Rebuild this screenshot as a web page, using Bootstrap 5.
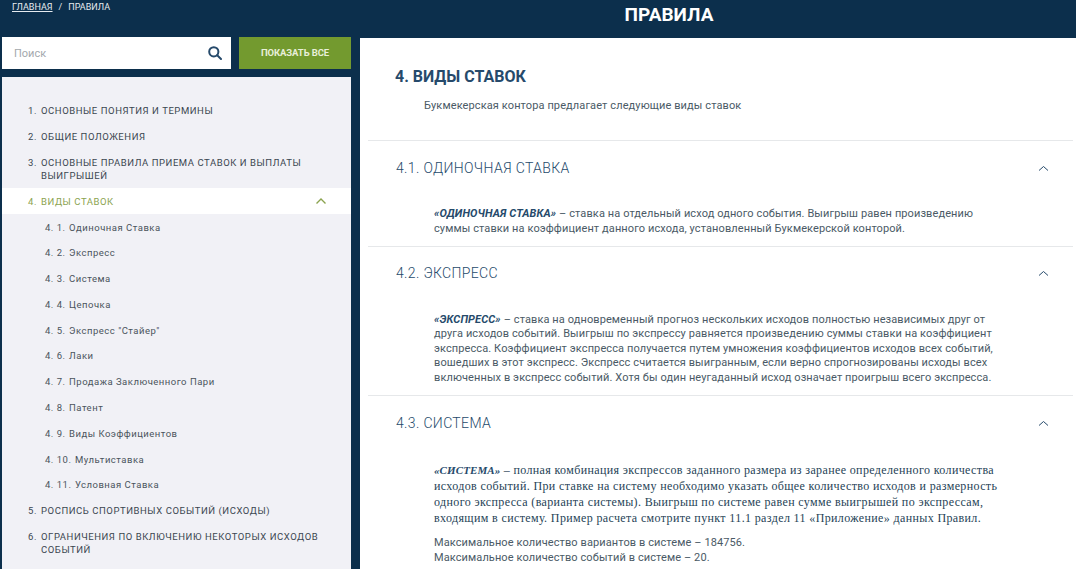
<!DOCTYPE html>
<html lang="ru">
<head>
<meta charset="utf-8">
<title>Правила</title>
<link rel="stylesheet" href="https://cdn.jsdelivr.net/npm/bootstrap@5.3.0/dist/css/bootstrap.min.css">
<style>
html,body{height:569px;overflow:hidden}
body{background:#0c2f4c;font-family:Roboto,"Liberation Sans",sans-serif;color:#4a5a66}
.side-col{width:360px;flex:none;padding:0 9px 0 2px}
.crumbs{height:37px;font-size:9px;color:#e6ebef;padding:1px 0 0 10px;line-height:12px}
.crumbs a{color:#e6ebef}
.crumbs i{font-style:normal;margin:0 6px}
.search-row{gap:8px;height:32px}
.search-box{width:229px;background:#fff;padding:0 9px 0 12px}
.search-box input{border:0;outline:0;padding:0;font-size:11px;width:170px;height:32px;background:transparent;font-family:inherit}
.search-box input::placeholder{color:#a3a8ad}
.show-btn{flex:1;background:#739a2f;color:#e8efd9;border:0;border-radius:0;font-size:9.5px;font-weight:700;letter-spacing:-.1px;padding:0}
.menu-panel{margin-top:8px;background:#f1f1f6;padding:21px 0 0;height:600px}
.menu-item{display:flex;padding:6.4px 30px 6.4px 26px;font-size:9.5px;line-height:13px;letter-spacing:.56px;color:#3b4650}
.menu-item b{font-weight:400;width:13px;flex:none}
.menu-item.on{background:#fff;color:#8ba34f}
.menu-item.on svg{margin-left:auto;margin-right:-6px}
.sub-item{padding:6.4px 20px 6.4px 43px;font-size:9.5px;line-height:13px;letter-spacing:.5px;color:#4a545c}
.sub-item span{margin-right:3.500px}
.main-col{flex:1;min-width:0}
.page-title{height:38px;color:#fff;font-size:19px;font-weight:700;line-height:30px;text-align:center;padding-right:98px;margin:0}
.main-panel{background:#fff;height:531px;padding:0 3px 0 8px}
.intro{padding:19px 0 0 27px;height:103px;border-bottom:1px solid #e6e8ea}
.intro h2{font-size:16px;font-weight:700;color:#264a6b;margin:0;line-height:40px}
.intro p{margin:0 0 0 29px;font-size:11px;line-height:14px;letter-spacing:.11px;padding-top:2px}
.acc{border-bottom:1px solid #e6e8ea;padding:0 24px 0 28px}
.acc-head{height:53px;padding-top:1px;font-size:14px;font-weight:300;color:#264a6b;letter-spacing:.35px}
.acc-body{padding:13px 40px 9.900px 38px;font-size:11px;line-height:14.500px;letter-spacing:.1px}
.acc-body p{margin:0}
.acc-body em{font-weight:700;color:#264a6b}
.acc-serif{font-family:"Liberation Serif",serif;font-size:12px;line-height:16px;letter-spacing:.37px;color:#264356;margin-bottom:10px!important}
.acc-serif em{font-size:11px;letter-spacing:.1px}
</style>
</head>
<body>
<div class="d-flex">
  <div class="side-col">
    <nav class="crumbs"><a href="#">ГЛАВНАЯ</a><i>/</i>ПРАВИЛА</nav>
    <div class="d-flex search-row">
      <div class="search-box d-flex align-items-center justify-content-between">
        <input type="text" placeholder="Поиск">
        <svg width="14" height="14" viewBox="0 0 14 14" fill="none" stroke="#264a6b" stroke-width="2"><circle cx="5.8" cy="5.8" r="4.6"/><path d="M9.2 9.2 13 13" stroke-linecap="round"/></svg>
      </div>
      <button class="btn show-btn" type="button">ПОКАЗАТЬ ВСЕ</button>
    </div>
    <div class="menu-panel">
      <div class="menu-item"><b>1.</b><span>ОСНОВНЫЕ ПОНЯТИЯ И ТЕРМИНЫ</span></div>
      <div class="menu-item"><b>2.</b><span>ОБЩИЕ ПОЛОЖЕНИЯ</span></div>
      <div class="menu-item"><b>3.</b><span>ОСНОВНЫЕ ПРАВИЛА ПРИЕМА СТАВОК И ВЫПЛАТЫ ВЫИГРЫШЕЙ</span></div>
      <div class="menu-item on"><b>4.</b><span>ВИДЫ СТАВОК</span>
        <svg width="12" height="13" viewBox="0 0 12 13" fill="none" stroke="#8ba34f" stroke-width="1.4"><path d="M1.500 8.500 6 4l4.500 4.500"/></svg></div>
      <div class="sub-item"><span>4. 1.</span>Одиночная Ставка</div>
      <div class="sub-item"><span>4. 2.</span>Экспресс</div>
      <div class="sub-item"><span>4. 3.</span>Система</div>
      <div class="sub-item"><span>4. 4.</span>Цепочка</div>
      <div class="sub-item"><span>4. 5.</span>Экспресс "Стайер"</div>
      <div class="sub-item"><span>4. 6.</span>Лаки</div>
      <div class="sub-item"><span>4. 7.</span>Продажа Заключенного Пари</div>
      <div class="sub-item"><span>4. 8.</span>Патент</div>
      <div class="sub-item"><span>4. 9.</span>Виды Коэффициентов</div>
      <div class="sub-item"><span>4. 10.</span>Мультиставка</div>
      <div class="sub-item"><span>4. 11.</span>Условная Ставка</div>
      <div class="menu-item"><b>5.</b><span>РОСПИСЬ СПОРТИВНЫХ СОБЫТИЙ (ИСХОДЫ)</span></div>
      <div class="menu-item"><b>6.</b><span>ОГРАНИЧЕНИЯ ПО ВКЛЮЧЕНИЮ НЕКОТОРЫХ ИСХОДОВ СОБЫТИЙ</span></div>
      <div class="menu-item"><b>7.</b><span>ПЕРЕНОС СОБЫТИЙ</span></div>
    </div>
  </div>
  <div class="main-col">
    <h1 class="page-title">ПРАВИЛА</h1>
    <div class="main-panel">
      <div class="intro">
        <h2>4. ВИДЫ СТАВОК</h2>
        <p>Букмекерская контора предлагает следующие виды ставок</p>
      </div>
      <section class="acc">
        <div class="acc-head d-flex align-items-center justify-content-between"><span>4.1. ОДИНОЧНАЯ СТАВКА</span>
          <svg width="11" height="11" viewBox="0 0 11 11" fill="none" stroke="#264a6b"><path d="M1 7.500 5.500 3.500 10 7.500"/></svg></div>
        <div class="acc-body"><p><em>«ОДИНОЧНАЯ СТАВКА»</em> – ставка на отдельный исход одного события. Выигрыш равен произведению суммы ставки на коэффициент данного исхода, установленный Букмекерской конторой.</p></div>
      </section>
      <section class="acc">
        <div class="acc-head d-flex align-items-center justify-content-between"><span>4.2. ЭКСПРЕСС</span>
          <svg width="11" height="11" viewBox="0 0 11 11" fill="none" stroke="#264a6b"><path d="M1 7.500 5.500 3.500 10 7.500"/></svg></div>
        <div class="acc-body"><p><em>«ЭКСПРЕСС»</em> – ставка на одновременный прогноз нескольких исходов полностью независимых друг от друга исходов событий. Выигрыш по экспрессу равняется произведению суммы ставки на коэффициент экспресса. Коэффициент экспресса получается путем умножения коэффициентов исходов всех событий, вошедших в этот экспресс. Экспресс считается выигранным, если верно спрогнозированы исходы всех включенных в экспресс событий. Хотя бы один неугаданный исход означает проигрыш всего экспресса.</p></div>
      </section>
      <section class="acc">
        <div class="acc-head d-flex align-items-center justify-content-between"><span>4.3. СИСТЕМА</span>
          <svg width="11" height="11" viewBox="0 0 11 11" fill="none" stroke="#264a6b"><path d="M1 7.500 5.500 3.500 10 7.500"/></svg></div>
        <div class="acc-body"><p class="acc-serif"><em>«СИСТЕМА»</em> – полная комбинация экспрессов заданного размера из заранее определенного количества исходов событий. При ставке на систему необходимо указать общее количество исходов и размерность одного экспресса (варианта системы). Выигрыш по системе равен сумме выигрышей по экспрессам, входящим в систему. Пример расчета смотрите пункт 11.1 раздел 11 «Приложение» данных Правил.</p>
        <p>Максимальное количество вариантов в системе – 184756.<br>Максимальное количество событий в системе – 20.</p></div>
      </section>
    </div>
  </div>
</div>
<script src="https://cdn.jsdelivr.net/npm/bootstrap@5.3.0/dist/js/bootstrap.bundle.min.js"></script>
</body>
</html>
